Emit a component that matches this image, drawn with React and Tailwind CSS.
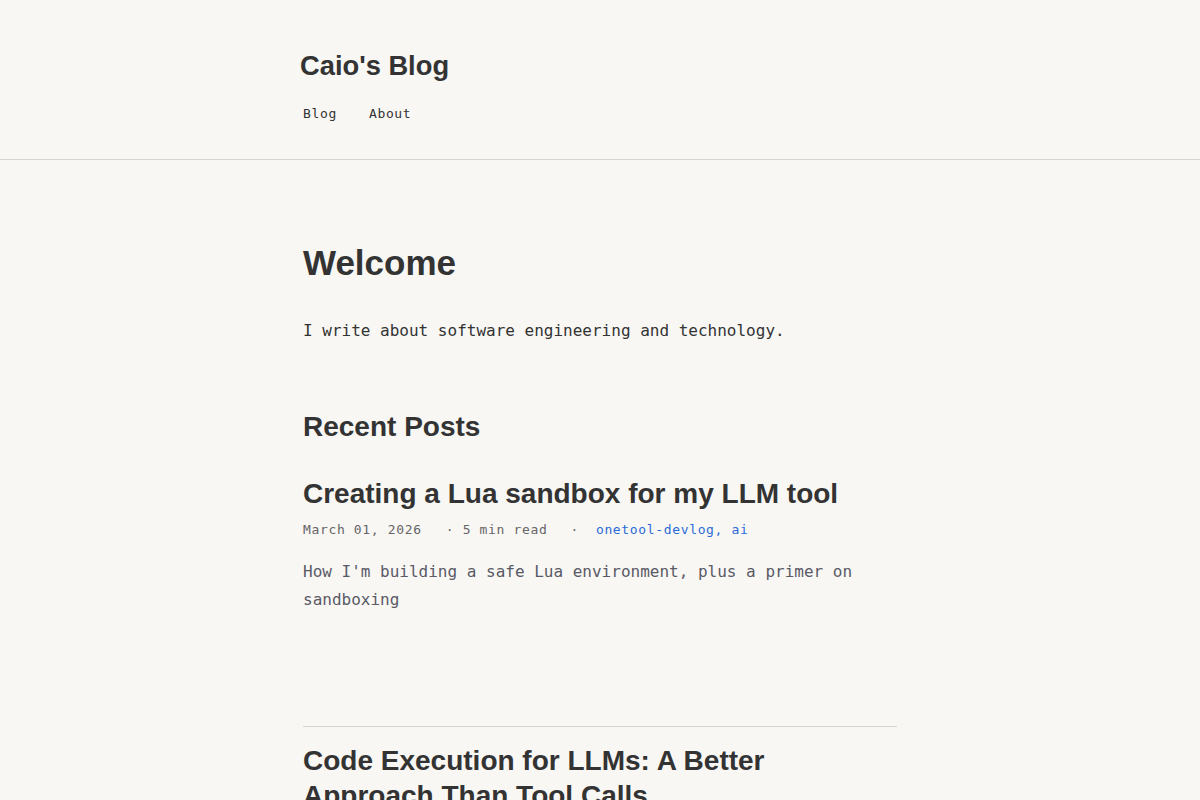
export default function App() {
  const mono = { fontFamily: '"DejaVu Sans Mono", monospace' };
  return (
    <div className="min-h-[800px] bg-[#f8f7f4] text-[#333333]" style={{ fontFamily: '"Liberation Sans", Arial, sans-serif' }}>
      <header className="border-b border-[#d6d5d2]">
        <div className="w-[600px] mx-auto pt-[50px] pb-[35px]">
          <h1 className="text-[27.3px] leading-[1.2] font-bold text-[#333333]">Caio's Blog</h1>
          <nav className="mt-[21px] ml-[3px] flex gap-[32px] text-[13px] tracking-[0.05em] leading-[20px] text-[#333333]" style={mono}>
            <a>Blog</a>
            <a>About</a>
          </nav>
        </div>
      </header>
      <main className="w-[594px] mx-auto pt-[82px]">
        <h2 className="text-[35px] leading-[1.2] font-bold text-[#333333]">Welcome</h2>
        <p className="mt-[33px] text-[16px] leading-[28px] text-[#333333]" style={mono}>
          I write about software engineering and technology.
        </p>
        <h2 className="mt-[65px] text-[28px] leading-[1.2] font-bold text-[#333333]">Recent Posts</h2>
        <article className="mt-[34px]">
          <h3 className="text-[28px] leading-[1.2] font-bold text-[#333333]">Creating a Lua sandbox for my LLM tool</h3>
          <div className="mt-[9px] flex text-[13px] tracking-[0.05em] leading-[20px] text-[#666666]" style={mono}>
            <span>March 01, 2026</span>
            <span className="ml-[24px]">· 5 min read</span>
            <span className="ml-[23px]">·</span>
            <span className="ml-[17px] text-[#2b6bd6]">onetool-devlog, ai</span>
          </div>
          <p className="mt-[18px] text-[16px] leading-[28px] text-[#5a5a66]" style={mono}>
            How I'm building a safe Lua environment, plus a primer on sandboxing
          </p>
        </article>
        <article className="mt-[112px] border-t border-[#d6d5d2] pt-[16px]">
          <h3 className="text-[28px] leading-[1.25] font-bold text-[#333333]">Code Execution for LLMs: A Better Approach Than Tool Calls</h3>
        </article>
      </main>
    </div>
  );
}
